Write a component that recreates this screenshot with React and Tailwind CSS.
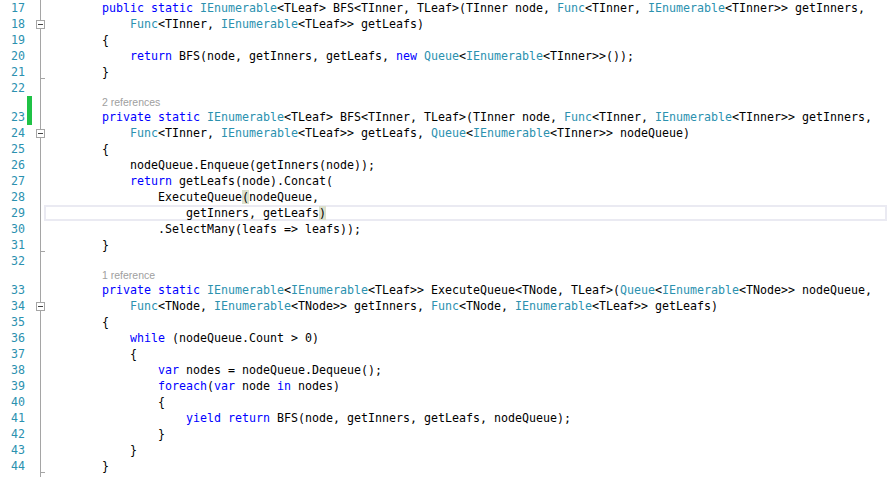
import React from "react";

const KEYWORDS = new Set(["public", "private", "static", "return", "new", "while", "var", "foreach", "in", "yield"]);
const TYPES = new Set(["IEnumerable", "Func", "Queue"]);

// fold: "line" | "box" | "tick"
const rows = [
  { n: 17, fold: "line", code: "        public static IEnumerable<TLeaf> BFS<TInner, TLeaf>(TInner node, Func<TInner, IEnumerable<TInner>> getInners," },
  { n: 18, fold: "box", code: "            Func<TInner, IEnumerable<TLeaf>> getLeafs)" },
  { n: 19, fold: "line", code: "        {" },
  { n: 20, fold: "line", code: "            return BFS(node, getInners, getLeafs, new Queue<IEnumerable<TInner>>());" },
  { n: 21, fold: "tick", code: "        }" },
  { n: 22, fold: "line", code: "" },
  { lens: "2 references", fold: "line", changed: true },
  { n: 23, fold: "line", changed: true, code: "        private static IEnumerable<TLeaf> BFS<TInner, TLeaf>(TInner node, Func<TInner, IEnumerable<TInner>> getInners," },
  { n: 24, fold: "box", code: "            Func<TInner, IEnumerable<TLeaf>> getLeafs, Queue<IEnumerable<TInner>> nodeQueue)" },
  { n: 25, fold: "line", code: "        {" },
  { n: 26, fold: "line", code: "            nodeQueue.Enqueue(getInners(node));" },
  { n: 27, fold: "line", code: "            return getLeafs(node).Concat(" },
  { n: 28, fold: "line", code: "                ExecuteQueue", brace: "(", after: "nodeQueue," },
  { n: 29, fold: "line", current: true, code: "                    getInners, getLeafs", brace: ")", after: "" },
  { n: 30, fold: "line", code: "                .SelectMany(leafs => leafs));" },
  { n: 31, fold: "tick", code: "        }" },
  { n: 32, fold: "line", code: "" },
  { lens: "1 reference", fold: "line" },
  { n: 33, fold: "line", code: "        private static IEnumerable<IEnumerable<TLeaf>> ExecuteQueue<TNode, TLeaf>(Queue<IEnumerable<TNode>> nodeQueue," },
  { n: 34, fold: "box", code: "            Func<TNode, IEnumerable<TNode>> getInners, Func<TNode, IEnumerable<TLeaf>> getLeafs)" },
  { n: 35, fold: "line", code: "        {" },
  { n: 36, fold: "line", code: "            while (nodeQueue.Count > 0)" },
  { n: 37, fold: "line", code: "            {" },
  { n: 38, fold: "line", code: "                var nodes = nodeQueue.Dequeue();" },
  { n: 39, fold: "line", code: "                foreach(var node in nodes)" },
  { n: 40, fold: "line", code: "                {" },
  { n: 41, fold: "line", code: "                    yield return BFS(node, getInners, getLeafs, nodeQueue);" },
  { n: 42, fold: "line", code: "                }" },
  { n: 43, fold: "line", code: "            }" },
  { n: 44, fold: "tick", code: "        }" },
  { fold: "line", code: "" },
];

function Tokens({ text }) {
  if (!text) return null;
  return text.split(/(\w+)/).map((part, i) => {
    if (KEYWORDS.has(part)) return <span key={i} className="text-[#0000ff]">{part}</span>;
    if (TYPES.has(part)) return <span key={i} className="text-[#2b91af]">{part}</span>;
    return <span key={i}>{part}</span>;
  });
}

function Outline({ fold }) {
  if (fold === "box") {
    return (
      <div className="w-[9px] h-full flex flex-col">
        <div className="ml-[5px] w-px h-[4px] bg-[#a5a5a5]" />
        <div className="ml-[1px] w-[9px] h-[9px] border border-[#a5a5a5] bg-white flex items-center justify-center">
          <div className="w-[5px] h-px bg-[#444]" />
        </div>
        <div className="ml-[5px] w-px flex-1 bg-[#a5a5a5]" />
      </div>
    );
  }
  if (fold === "tick") {
    return (
      <div className="w-[9px] h-full">
        <div className="ml-[5px] w-[5px] h-[15px] border-l border-b border-[#a5a5a5]" />
        <div className="ml-[5px] w-px h-px bg-[#a5a5a5]" />
      </div>
    );
  }
  return (
    <div className="w-[9px] h-full">
      <div className="ml-[5px] w-px h-full bg-[#a5a5a5]" />
    </div>
  );
}

function Row({ row }) {
  const height = row.lens ? "h-[13px]" : "h-[16px]";
  return (
    <div className={`flex ${height}`}>
      <div className="w-[25px] text-right text-[#2b91af]">{row.n ?? ""}</div>
      <div className="w-[10px] h-full">
        {row.changed && <div className="ml-[2px] w-[5px] h-full bg-[#1fc246]" />}
      </div>
      <Outline fold={row.fold} />
      {row.lens ? (
        <div className="flex-1 pl-[58px] text-[10.5px] leading-[13px] text-[#a0a0a0] font-['Liberation_Sans',sans-serif]">
          {row.lens}
        </div>
      ) : (
        <div
          className={`flex-1 min-w-0 pl-[2px] whitespace-pre text-black ${
            row.current ? "shadow-[inset_0_0_0_2px_#eaeaf2]" : ""
          }`}
        >
          <Tokens text={row.code} />
          {row.brace && <span className="bg-[#dbe0cc]">{row.brace}</span>}
          <Tokens text={row.after} />
        </div>
      )}
    </div>
  );
}

export default function App() {
  return (
    <div className="w-[887px] h-[477px] overflow-hidden bg-white font-['DejaVu_Sans_Mono',monospace] text-[11.63px] leading-[16px]">
      {rows.map((row, i) => (
        <Row key={i} row={row} />
      ))}
    </div>
  );
}
